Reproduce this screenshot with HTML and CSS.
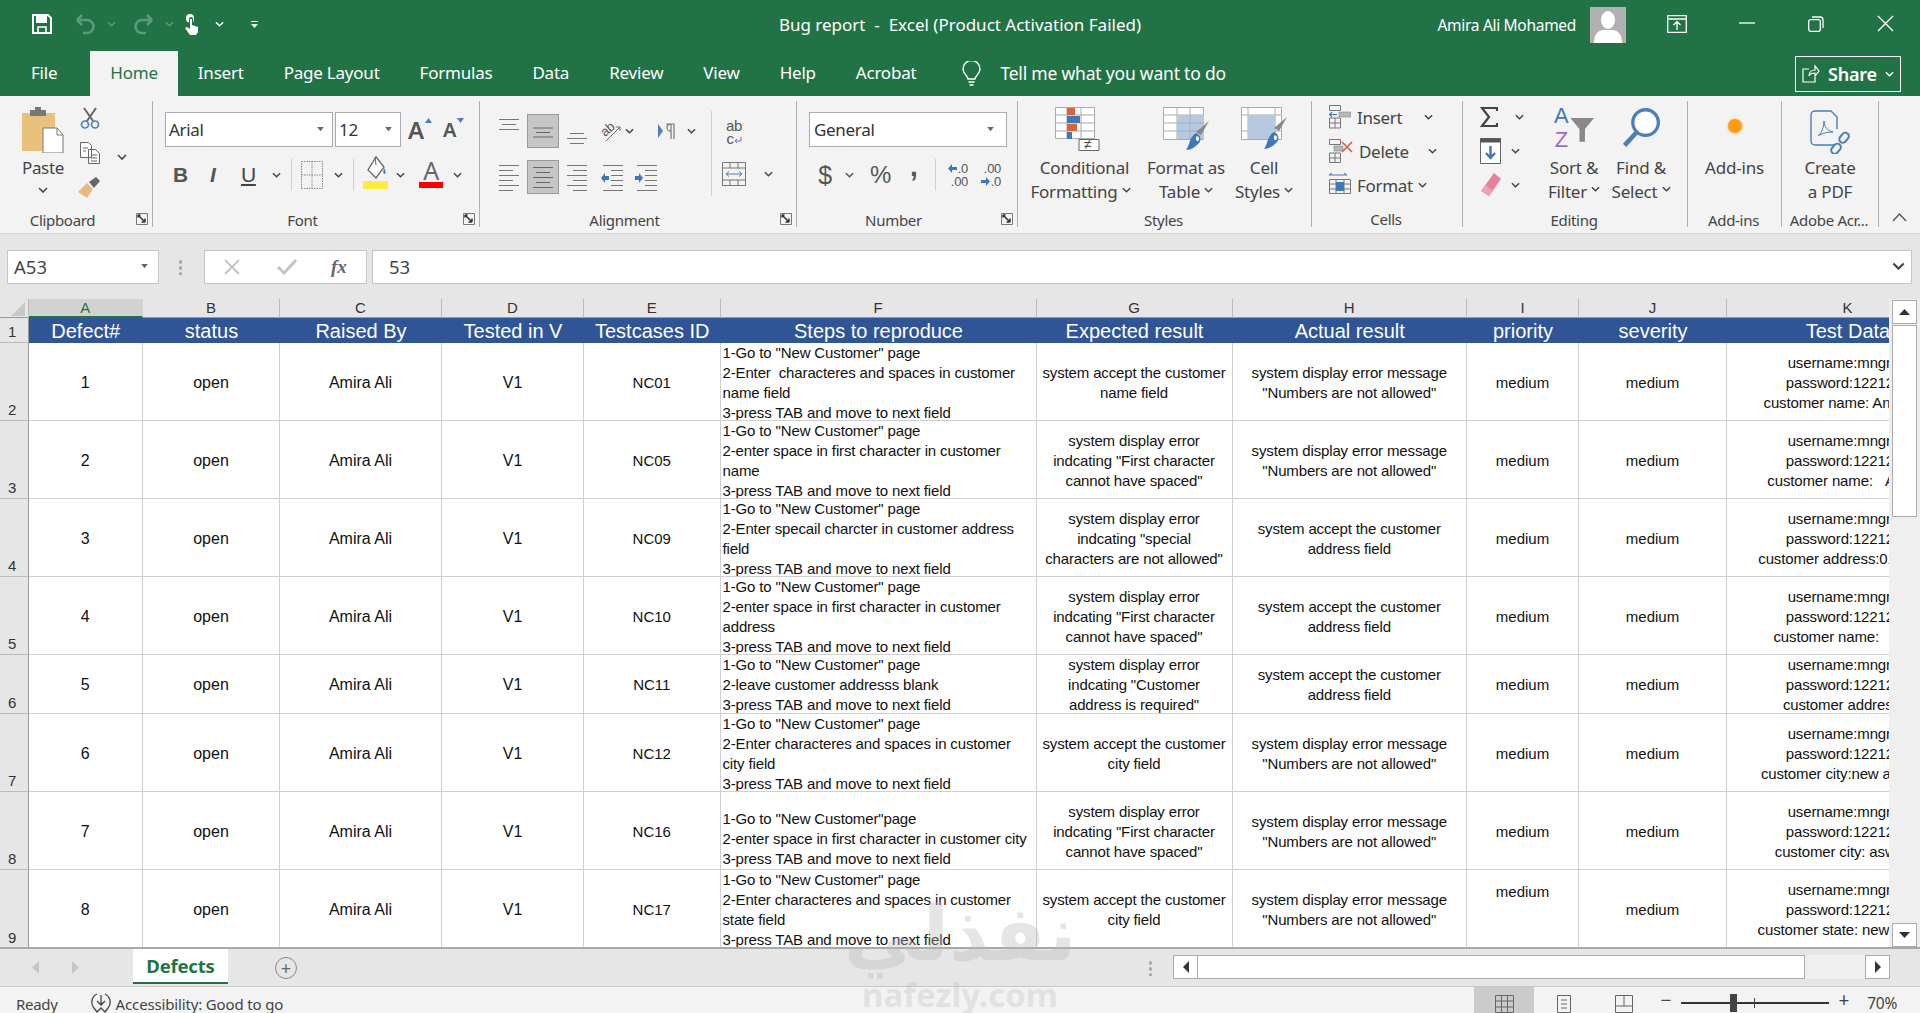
FILE: index.html
```html
<!DOCTYPE html>
<html lang="en">
<head>
<meta charset="utf-8">
<title>Bug report - Excel</title>
<link rel="stylesheet" href="styles.css">
</head>
<body>
<svg class="defs" width="0" height="0" aria-hidden="true">
  <symbol id="chev" viewBox="0 0 10 6"><path d="M1 1l4 4 4-4" fill="none" stroke="currentColor" stroke-width="1.6"/></symbol>
  <symbol id="launch" viewBox="0 0 12 12"><path d="M.5.5h11v11H.5z" fill="none" stroke="#777"/><path d="M2 2h2.5M2 2v2.5M2 2l7 7M9 9V5.5M9 9H5.5" fill="none" stroke="#333" stroke-width="1.5"/></symbol>
  <symbol id="drop" viewBox="0 0 10 6"><path d="M1 0h8L5 5z" fill="#666"/></symbol>
</svg>

<header class="titlebar">
  <div class="qat">
    <svg class="q-save" width="20" height="20" viewBox="0 0 20 20"><path d="M1 1h15l3 3v15H1z" fill="none" stroke="#fff" stroke-width="2"/><path d="M4 2h11v7H4z" fill="#fff"/><path d="M6 13h8v6H6z" fill="none" stroke="#fff" stroke-width="1.6"/></svg>
    <svg class="q-undo" width="22" height="22" viewBox="0 0 22 22"><path d="M3 7l5-5M3 7l5 5M3 7h10a6 6 0 0 1 0 13H9" fill="none" stroke="#5c9a7c" stroke-width="2.6"/></svg>
    <svg class="q-c1 dim" width="9" height="6"><use href="#chev"/></svg>
    <svg class="q-redo" width="22" height="22" viewBox="0 0 22 22"><path d="M19 7l-5-5M19 7l-5 5M19 7H9a6 6 0 0 0 0 13h4" fill="none" stroke="#5c9a7c" stroke-width="2.6"/></svg>
    <svg class="q-c2 dim" width="9" height="6"><use href="#chev"/></svg>
    <svg class="q-hand" width="16" height="22" viewBox="0 0 16 22"><path d="M6 1a4 4 0 0 1 4 4v2a4 4 0 0 1-1 2.500V6a2 2 0 0 0-4 0v3.500A4 4 0 0 1 2 7V5a4 4 0 0 1 4-4z" fill="#fff"/><path d="M6 6h2v6l6 2v5l-2 3H6l-5-7 2-1 3 2z" fill="#fff"/></svg>
    <svg class="q-c3 light" width="9" height="6"><use href="#chev"/></svg>
    <svg class="q-more" width="9" height="9" viewBox="0 0 9 9"><path d="M1 1h7v1H1zM1 4h7L4.500 8z" fill="#fff"/></svg>
  </div>
  <div class="doc-title">Bug report&nbsp; -&nbsp; Excel (Product Activation Failed)</div>
  <div class="win">
    <span class="user">Amira Ali Mohamed</span>
    <svg class="avatar" width="36" height="36" viewBox="0 0 36 36"><path fill="#b1b1b1" d="M0 0h36v36H0z"/><ellipse cx="18" cy="13" rx="7" ry="9" fill="#fff"/><path d="M4 36c0-8 3-12 9-13h10c6 1 9 5 9 13z" fill="#fff"/></svg>
    <svg class="w-disp" width="20" height="18" viewBox="0 0 20 18"><path d="M.7.7h18.600v16.600H.7zM1 4h18M10 15V7M6.500 10L10 6.500l3.500 3.500" fill="none" stroke="#fff" stroke-width="1.300"/></svg>
    <svg class="w-min" width="16" height="2" viewBox="0 0 16 2"><path d="M0 1h16" stroke="#fff" stroke-width="1.300"/></svg>
    <svg class="w-res" width="16" height="16" viewBox="0 0 16 16"><rect x=".7" y="3.700" width="11.600" height="11.600" rx="2" fill="none" stroke="#fff" stroke-width="1.300"/><path d="M4 1h8a3 3 0 0 1 3 3v8" fill="none" stroke="#fff" stroke-width="1.300"/></svg>
    <svg class="w-close" width="17" height="17" viewBox="0 0 17 17"><path d="M1 1l15 15M16 1L1 16" stroke="#fff" stroke-width="1.400"/></svg>
  </div>
</header>

<nav class="tabs">
  <span class="tab tab-file">File</span>
  <span class="tab tab-home">Home</span>
  <span class="tab">Insert</span>
  <span class="tab">Page Layout</span>
  <span class="tab">Formulas</span>
  <span class="tab">Data</span>
  <span class="tab">Review</span>
  <span class="tab">View</span>
  <span class="tab">Help</span>
  <span class="tab">Acrobat</span>
  <svg class="bulb" width="19" height="25" viewBox="0 0 19 25"><path d="M6 18c0-3-5-5-5-10a8.500 8.500 0 0 1 17 0c0 5-5 7-5 10zM6.500 21h6M7.500 24h4" fill="none" stroke="#fff" stroke-width="1.400"/></svg>
  <span class="tell">Tell me what you want to do</span>
  <span class="share">
    <svg width="18" height="19" viewBox="0 0 18 19"><path d="M7 5H1v13h12v-5M7 12c0-4 3-6 6-6V2l4 5-4 5V9c-3 0-5 1-6 3z" fill="none" stroke="#fff" stroke-width="1.200"/></svg>
    <b>Share</b>
    <svg class="light" width="9" height="6"><use href="#chev"/></svg>
  </span>
</nav>

<section class="ribbon">
  <div class="grp g-clip">
    <div class="g-body clip-body">
      <div class="paste">
        <svg width="42" height="46" viewBox="0 0 42 46"><path d="M0 6h33v38H0z" fill="#e8c27c"/><path d="M8 3h16v6H8z" fill="#777"/><path d="M13 0h6v5h-6z" fill="#777"/><path d="M21 21h14l6 7v18H21z" fill="#fff" stroke="#777"/><path d="M35 21v7h6" fill="none" stroke="#777"/></svg>
        <span class="paste-t">Paste</span>
        <svg class="mt-chev" width="10" height="6"><use href="#chev"/></svg>
      </div>
      <div class="clip-small">
        <svg width="20" height="22" viewBox="0 0 20 22"><path d="M4 1l9 13M16 1L7 14" stroke="#666" stroke-width="2"/><circle cx="5" cy="17.500" r="3.500" fill="none" stroke="#4a7fb8" stroke-width="1.700"/><circle cx="15" cy="17.500" r="3.500" fill="none" stroke="#4a7fb8" stroke-width="1.700"/></svg>
        <svg width="20" height="22" viewBox="0 0 20 22"><path d="M.5.500h8l3 3v12H.5zM8.500 7.500h7l4 4v10h-11z" fill="#fff" stroke="#666"/><path d="M3 6h5M3 9h3M11 13h6M11 16h6M11 19h6" stroke="#666"/></svg>
        <svg width="23" height="21" viewBox="0 0 23 21"><path d="M9 6l6 6-6 9-9-6z" fill="#e8b87c"/><path d="M11 5l7-5 4 4-6 7z" fill="#666"/></svg>
      </div>
      <svg class="clip-chev" width="10" height="6"><use href="#chev"/></svg>
    </div>
    <div class="g-label lab-launch">Clipboard<svg class="launch" width="12" height="12"><use href="#launch"/></svg></div>
  </div>

  <div class="grp g-font">
    <div class="g-body stack">
      <div class="rrow">
        <div class="combo c-font">Arial<svg width="9" height="5"><use href="#drop"/></svg></div>
        <div class="combo c-size">12<svg width="9" height="5"><use href="#drop"/></svg></div>
        <span class="grow-a">A<svg width="7" height="5" viewBox="0 0 7 5"><path d="M3.500 0L7 5H0z" fill="#4a7fb8"/></svg></span>
        <span class="shrink-a">A<svg width="7" height="5" viewBox="0 0 7 5"><path d="M3.500 5L7 0H0z" fill="#4a7fb8"/></svg></span>
      </div>
      <div class="rrow fmt">
        <b class="f-b">B</b>
        <i class="f-i">I</i>
        <u class="f-u">U</u>
        <svg class="f-c1" width="9" height="6"><use href="#chev"/></svg>
        <span class="vsep"></span>
        <svg class="f-bord" width="22" height="28" viewBox="0 0 22 28"><path d="M.5.500h21v27H.5zM11 .5v27M.5 14h21" fill="none" stroke="#888" stroke-dasharray="1.500 1"/></svg>
        <svg class="f-c2" width="9" height="6"><use href="#chev"/></svg>
        <span class="vsep"></span>
        <svg class="f-fill" width="25" height="33" viewBox="0 0 25 33"><path d="M13 1l8 10-8 11L5 14z" fill="#fff" stroke="#666" stroke-width="1.300"/><path d="M12 1l1 8" stroke="#666"/><path d="M21 12c2 3 2 6 .5 6S20 15 21 12z" fill="#4a7fb8"/><path d="M0 25h25v8H0z" fill="#ffeb3b"/></svg>
        <svg class="f-c3" width="9" height="6"><use href="#chev"/></svg>
        <span class="fontcolor">A</span>
        <svg class="f-c4" width="9" height="6"><use href="#chev"/></svg>
      </div>
    </div>
    <div class="g-label lab-launch">Font<svg class="launch" width="12" height="12"><use href="#launch"/></svg></div>
  </div>

  <div class="grp g-align">
    <div class="g-body align-body">
      <div class="stack al-stack">
        <div class="rrow al">
          <svg class="a-ic" width="20" height="34" viewBox="0 0 20 34"><path d="M0 5.500h20M3 10.500h14M0 15.500h20" stroke="#777"/></svg>
          <span class="on"><svg width="20" height="34" viewBox="0 0 20 34"><path d="M0 13h20M3 17.500h14M0 22h20" stroke="#666"/></svg></span>
          <svg class="a-ic" width="20" height="34" viewBox="0 0 20 34"><path d="M3 19.500h14M0 24.500h20M3 29.500h14" stroke="#777"/></svg>
          <svg class="a-or" width="20" height="24" viewBox="0 0 20 24"><text x="0" y="14" class="svg-ab" transform="rotate(-40 7 12)">ab</text><path d="M4 22L18 8M14 8h4v4" fill="none" stroke="#666"/></svg>
          <svg class="a-c" width="9" height="6"><use href="#chev"/></svg>
          <svg class="a-rtl" width="17" height="17" viewBox="0 0 17 17"><path d="M0 1l5 7-5 7z" fill="#4a7fb8"/><path d="M13 1v15M16 1v15M8 1h8v1M13 8a4 3.500 0 0 1 0-7" fill="none" stroke="#777" stroke-width="1.200"/></svg>
          <svg class="a-c2" width="9" height="6"><use href="#chev"/></svg>
        </div>
        <div class="rrow al2">
          <svg class="a-ic2" width="20" height="34" viewBox="0 0 20 34"><path d="M0 5.500h20M0 10.500h14M0 15.500h20M0 20.500h14M0 25.500h20M0 30.500h14" stroke="#777"/></svg>
          <span class="on"><svg width="20" height="34" viewBox="0 0 20 34"><path d="M0 6.500h20M3 11.500h14M0 16.500h20M3 21.500h14M0 26.500h20" stroke="#666"/></svg></span>
          <svg class="a-ic2" width="20" height="34" viewBox="0 0 20 34"><path d="M0 5.500h20M6 10.500h14M0 15.500h20M6 20.500h14M0 25.500h20M6 30.500h14" stroke="#777"/></svg>
          <svg class="a-ind" width="22" height="34" viewBox="0 0 22 34"><path d="M2 5.500h20M10 10.500h12M10 15.500h12M10 20.500h12M10 25.500h12M2 30.500h20" stroke="#777"/><path d="M0 18l4-5v3h4v4H4v3z" fill="#3f78b6"/></svg>
          <svg class="a-ind" width="22" height="34" viewBox="0 0 22 34"><path d="M2 5.500h20M10 10.500h12M10 15.500h12M10 20.500h12M10 25.500h12M2 30.500h20" stroke="#777"/><path d="M8 18l-4-5v3H0v4h4v3z" fill="#3f78b6"/></svg>
        </div>
      </div>
      <span class="vsep tall"></span>
      <div class="stack wrapcol">
        <div class="wrapic"><span>ab</span><span class="wr2">c<svg width="8" height="8" viewBox="0 0 8 8"><path d="M7 0v4H1M3 2L1 4l2 2" fill="none" stroke="#4a7fb8"/></svg></span></div>
        <div class="rrow mergerow">
          <svg width="24" height="24" viewBox="0 0 24 24"><path d="M.5.500h23v23H.5zM.5 6h23M.5 18h23M8 .5V6M16 .5V6M8 18v5.500M16 18v5.500" fill="none" stroke="#777"/><path d="M4 12h16M4 12l3-2.500M4 12l3 2.500M20 12l-3-2.500M20 12l-3 2.500" fill="none" stroke="#4a7fb8"/></svg>
          <svg width="9" height="6"><use href="#chev"/></svg>
        </div>
      </div>
    </div>
    <div class="g-label lab-launch">Alignment<svg class="launch" width="12" height="12"><use href="#launch"/></svg></div>
  </div>

  <div class="grp g-num">
    <div class="g-body stack">
      <div class="rrow"><div class="combo c-gen">General<svg width="9" height="5"><use href="#drop"/></svg></div></div>
      <div class="rrow numfmt">
        <span class="dollar">$</span>
        <svg class="n-c1" width="9" height="6"><use href="#chev"/></svg>
        <span class="pct">%</span>
        <b class="comma">,</b>
        <span class="vsep"></span>
        <span class="dec"><span><svg width="9" height="9" viewBox="0 0 9 9"><path d="M0 4.500L4 0v3h5v3H4v3z" fill="#3f78b6"/></svg>.0</span><span>.00</span></span>
        <span class="dec dec2"><span>.00</span><span><svg width="9" height="9" viewBox="0 0 9 9"><path d="M9 4.500L5 0v3H0v3h5v3z" fill="#3f78b6"/></svg>.0</span></span>
      </div>
    </div>
    <div class="g-label lab-launch">Number<svg class="launch" width="12" height="12"><use href="#launch"/></svg></div>
  </div>

  <div class="grp g-styles">
    <div class="g-body big-row">
      <div class="big b-cond">
        <svg width="52" height="44" viewBox="0 0 52 44"><path d="M.5.500h39v31H.5zM.5 8h39M.5 16h39M.5 24h39M12 .5v31M26 .5v31" fill="#fff" stroke="#aaa"/><path d="M12 1h8v7h-8z" fill="#d9613c"/><path d="M12 9h13v7H12z" fill="#3f78b6"/><path d="M12 17h10v7H12z" fill="#d9613c"/><path d="M12 25h5v7h-5z" fill="#3f78b6"/><path d="M24 32h20v11H24z" fill="#fff" stroke="#666" transform="translate(0 .5)"/><text x="29" y="42" class="svg-ne">≠</text></svg>
        <span class="bt">Conditional</span>
        <span class="bt">Formatting <svg width="9" height="6"><use href="#chev"/></svg></span>
      </div>
      <div class="big b-tab">
        <svg width="46" height="44" viewBox="0 0 46 44"><path d="M.5.500h40v32H.5zM.5 8h40M.5 16h40M.5 24h40M14 .5v32M27 .5v32" fill="#fff" stroke="#aaa"/><path d="M14 8h27v24H14z" fill="#b7c8df"/><path d="M14 16h27M14 24h27M27 8v24" stroke="#a0b0c6"/><path d="M46 14l-8 14-5-3z" fill="#888"/><path d="M33 26c5 2 6 8 2 11-3 3-7 6-12 6 4-5 3-13 10-17z" fill="#3f78b6"/><path d="M34 29c2 1 3 3 1 5-2 1-3-3-1-5z" fill="#fff"/></svg>
        <span class="bt">Format as</span>
        <span class="bt">Table <svg width="9" height="6"><use href="#chev"/></svg></span>
      </div>
      <div class="big b-cell">
        <svg width="46" height="44" viewBox="0 0 46 44"><path d="M.5.500h40v32H.5zM.5 8h40M.5 24h40M7 .5v32M34 .5v32" fill="#fff" stroke="#aaa"/><path d="M7 8h27v24H7z" fill="#b7c8df"/><path d="M46 10l-8 14-5-3z" fill="#888"/><path d="M33 25c5 2 6 8 2 11-3 3-7 6-12 6 4-5 3-13 10-17z" fill="#3f78b6"/><path d="M34 28c2 1 3 3 1 5-2 1-3-3-1-5z" fill="#fff"/></svg>
        <span class="bt">Cell</span>
        <span class="bt">Styles <svg width="9" height="6"><use href="#chev"/></svg></span>
      </div>
    </div>
    <div class="g-label">Styles</div>
  </div>

  <div class="grp g-cells">
    <div class="g-body cells-body">
      <div class="cellrow c-ins">
        <svg width="22" height="24" viewBox="0 0 22 24"><path d="M.5.500h11v5H.5zM.5 13h11v10H.5zM6 13v10M.5 18h11" fill="none" stroke="#777"/><path d="M10 7h12v5H10z" fill="#b8b8b8" stroke="#777" stroke-width=".5"/><path d="M0 9.500h8M3 7L.5 9.500 3 12" fill="none" stroke="#3f78b6" stroke-width="1.200"/></svg>
        <span>Insert</span><svg class="cc" width="9" height="6"><use href="#chev"/></svg>
      </div>
      <div class="cellrow c-del">
        <svg width="24" height="24" viewBox="0 0 24 24"><path d="M.5.500h11v5H.5zM.5 14h11v9.500H.5zM6 14v9.500M.5 19h11" fill="none" stroke="#777"/><path d="M5 7h9v5H5z" fill="#b8b8b8" stroke="#777" stroke-width=".5"/><path d="M13 3l10 10M23 3L13 13" stroke="#d9613c" stroke-width="1.600"/></svg>
        <span>Delete</span><svg class="cc" width="9" height="6"><use href="#chev"/></svg>
      </div>
      <div class="cellrow c-fmt">
        <svg width="22" height="26" viewBox="0 0 22 26"><path d="M0 3h18M0 3l3-2M18 3l-3-2" fill="none" stroke="#3f78b6"/><path d="M.5 7.500h21v14H.5zM7 7.500v14M15 7.500v14M.5 12h21M.5 17h21" fill="none" stroke="#777"/><path d="M7 10h8v9H7z" fill="#3f78b6"/></svg>
        <span>Format</span><svg class="cc" width="9" height="6"><use href="#chev"/></svg>
      </div>
    </div>
    <div class="g-label">Cells</div>
  </div>

  <div class="grp g-edit">
    <div class="g-body edit-body">
      <div class="edit-small">
        <div class="es es1"><svg width="18" height="20" viewBox="0 0 18 20"><path d="M17 4V1H2l7 9-7 9h15v-3" fill="none" stroke="#444" stroke-width="2.200"/></svg><svg class="ec1" width="9" height="6"><use href="#chev"/></svg></div>
        <div class="es es2"><svg width="21" height="26" viewBox="0 0 21 26"><path d="M.5.500h20v25H.5z" fill="#fff" stroke="#666"/><path d="M.5.500h20v4H.5z" fill="#555"/><path d="M10.500 8v12M6 15l4.500 5 4.500-5" fill="none" stroke="#3f78b6" stroke-width="2.400"/></svg><svg class="ec2" width="9" height="6"><use href="#chev"/></svg></div>
        <div class="es es3"><svg width="21" height="24" viewBox="0 0 21 24"><path d="M14 0l7 6-12 17-8-5z" fill="#e8809a"/><path d="M1 18l5-6 7 6-4 5z" fill="#f0a0b4"/></svg><svg class="ec3" width="9" height="6"><use href="#chev"/></svg></div>
      </div>
      <div class="big b-sort">
        <svg width="44" height="42" viewBox="0 0 44 46"><text x="0" y="18" class="svg-az a">A</text><text x="1" y="44" class="svg-az z">Z</text><path d="M18 12h26l-10 12v14h-6V24z" fill="#888"/></svg>
        <span class="bt">Sort &amp;</span>
        <span class="bt">Filter <svg width="9" height="6"><use href="#chev"/></svg></span>
      </div>
      <div class="big b-find">
        <svg width="42" height="42" viewBox="0 0 42 46"><circle cx="26" cy="17" r="14" fill="#fff" stroke="#4a7fb8" stroke-width="3.600"/><path d="M16 28L3 42" stroke="#4a7fb8" stroke-width="5"/></svg>
        <span class="bt">Find &amp;</span>
        <span class="bt">Select <svg width="9" height="6"><use href="#chev"/></svg></span>
      </div>
    </div>
    <div class="g-label">Editing</div>
  </div>

  <div class="grp g-addins">
    <div class="g-body big-row">
      <div class="big b-add">
        <span class="dot"></span>
        <span class="bt">Add-ins</span>
      </div>
    </div>
    <div class="g-label">Add-ins</div>
  </div>

  <div class="grp g-adobe">
    <div class="g-body big-row">
      <div class="big b-pdf">
        <svg width="40" height="44" viewBox="0 0 40 44"><path d="M24 35H5a4 4 0 0 1-4-4V5a4 4 0 0 1 4-4h16l6 6v12" fill="none" stroke="#4a7fb8" stroke-width="1.400"/><path d="M8 26c4-3 6-10 6-15 0 6 4 10 9 11-5 0-11 1-15 4z" fill="none" stroke="#4a7fb8"/><g fill="none" stroke="#4a7fb8" stroke-width="2"><rect x="23" y="33" width="7" height="11" rx="3.500" transform="rotate(40 26 38)"/><rect x="31" y="22" width="7" height="11" rx="3.500" transform="rotate(40 34 27)"/></g></svg>
        <span class="bt">Create</span>
        <span class="bt">a PDF</span>
      </div>
    </div>
    <div class="g-label">Adobe Acr...</div>
  </div>
  <div class="collapse"><svg width="15" height="9" viewBox="0 0 15 9"><path d="M1 8l6.500-7L14 8" fill="none" stroke="#555" stroke-width="1.400"/></svg></div>
</section>

<section class="formula">
  <div class="namebox">A53<svg width="9" height="5"><use href="#drop"/></svg></div>
  <span class="fdots"></span>
  <div class="fbtns">
    <svg width="16" height="16" viewBox="0 0 16 16"><path d="M1 1l14 14M15 1L1 15" stroke="#c4c4c4" stroke-width="2"/></svg>
    <svg width="20" height="16" viewBox="0 0 20 16"><path d="M1 8l6 6L19 1" fill="none" stroke="#c4c4c4" stroke-width="3"/></svg>
    <span class="fx">fx</span>
  </div>
  <div class="finput"><span>53</span><svg width="13" height="8"><use href="#chev"/></svg></div>
</section>

<main class="sheet">
  <div class="gridwrap">
    <div class="grid">
      <div class="corner"><svg width="14" height="14" viewBox="0 0 14 14"><path d="M14 0v14H0z" fill="#c8c8c8"/></svg></div>
      <div class="col col-a">A</div><div class="col">B</div><div class="col">C</div><div class="col">D</div><div class="col">E</div><div class="col">F</div><div class="col">G</div><div class="col">H</div><div class="col">I</div><div class="col">J</div><div class="col">K</div>

      <div class="rh">1</div>
      <div class="th">Defect#</div><div class="th">status</div><div class="th">Raised By</div><div class="th">Tested in V</div><div class="th">Testcases ID</div><div class="th">Steps to reproduce</div><div class="th">Expected result</div><div class="th">Actual result</div><div class="th">priority</div><div class="th">severity</div><div class="th">Test Data</div>

      <div class="rh">2</div>
      <div class="td">1</div><div class="td">open</div><div class="td">Amira Ali</div><div class="td">V1</div><div class="td sm">NC01</div>
      <div class="td left">1-Go to "New Customer" page<br>2-Enter&nbsp; characteres and spaces in customer<br>name field<br>3-press TAB and move to next field</div>
      <div class="td">system accept the customer<br>name field</div>
      <div class="td">system display error message<br>"Numbers are not allowed"</div>
      <div class="td sm">medium</div><div class="td sm">medium</div>
      <div class="td">username:mngr12<br>password:1221211<br>customer name: Anna123</div>

      <div class="rh">3</div>
      <div class="td">2</div><div class="td">open</div><div class="td">Amira Ali</div><div class="td">V1</div><div class="td sm">NC05</div>
      <div class="td left">1-Go to "New Customer" page<br>2-enter space in first character in customer<br>name<br>3-press TAB and move to next field</div>
      <div class="td">system display error<br>indcating "First character<br>cannot have spaced"</div>
      <div class="td">system display error message<br>"Numbers are not allowed"</div>
      <div class="td sm">medium</div><div class="td sm">medium</div>
      <div class="td">username:mngr12<br>password:1221211<br>customer name:&nbsp;&nbsp;&nbsp;Anna1</div>

      <div class="rh">4</div>
      <div class="td">3</div><div class="td">open</div><div class="td">Amira Ali</div><div class="td">V1</div><div class="td sm">NC09</div>
      <div class="td left">1-Go to "New Customer" page<br>2-Enter specail charcter in customer address<br>field<br>3-press TAB and move to next field</div>
      <div class="td">system display error<br>indcating "special<br>characters are not allowed"</div>
      <div class="td">system accept the customer<br>address field</div>
      <div class="td sm">medium</div><div class="td sm">medium</div>
      <div class="td">username:mngr12<br>password:1221211<br>customer address:0123456</div>

      <div class="rh">5</div>
      <div class="td">4</div><div class="td">open</div><div class="td">Amira Ali</div><div class="td">V1</div><div class="td sm">NC10</div>
      <div class="td left">1-Go to "New Customer" page<br>2-enter space in first character in customer<br>address<br>3-press TAB and move to next field</div>
      <div class="td">system display error<br>indcating "First character<br>cannot have spaced"</div>
      <div class="td">system accept the customer<br>address field</div>
      <div class="td sm">medium</div><div class="td sm">medium</div>
      <div class="td">username:mngr12<br>password:1221211<br>customer name:&nbsp;&nbsp;&nbsp;Ahm</div>

      <div class="rh">6</div>
      <div class="td">5</div><div class="td">open</div><div class="td">Amira Ali</div><div class="td">V1</div><div class="td sm">NC11</div>
      <div class="td left">1-Go to "New Customer" page<br>2-leave customer addresss blank<br>3-press TAB and move to next field</div>
      <div class="td">system display error<br>indcating "Customer<br>address is required"</div>
      <div class="td">system accept the customer<br>address field</div>
      <div class="td sm">medium</div><div class="td sm">medium</div>
      <div class="td">username:mngr12<br>password:1221211<br>customer address:0</div>

      <div class="rh">7</div>
      <div class="td">6</div><div class="td">open</div><div class="td">Amira Ali</div><div class="td">V1</div><div class="td sm">NC12</div>
      <div class="td left">1-Go to "New Customer" page<br>2-Enter characteres and spaces in customer<br>city field<br>3-press TAB and move to next field</div>
      <div class="td">system accept the customer<br>city field</div>
      <div class="td">system display error message<br>"Numbers are not allowed"</div>
      <div class="td sm">medium</div><div class="td sm">medium</div>
      <div class="td">username:mngr12<br>password:1221211<br>customer city:new alex123</div>

      <div class="rh">8</div>
      <div class="td">7</div><div class="td">open</div><div class="td">Amira Ali</div><div class="td">V1</div><div class="td sm">NC16</div>
      <div class="td left bottom">1-Go to "New Customer"page<br>2-enter space in first character in customer city<br>3-press TAB and move to next field</div>
      <div class="td">system display error<br>indcating "First character<br>cannot have spaced"</div>
      <div class="td">system display error message<br>"Numbers are not allowed"</div>
      <div class="td sm">medium</div><div class="td sm">medium</div>
      <div class="td">username:mngr12<br>password:1221211<br>customer city: aswan1</div>

      <div class="rh">9</div>
      <div class="td">8</div><div class="td">open</div><div class="td">Amira Ali</div><div class="td">V1</div><div class="td sm">NC17</div>
      <div class="td left">1-Go to "New Customer" page<br>2-Enter characteres and spaces in customer<br>state field<br>3-press TAB and move to next field</div>
      <div class="td">system accept the customer<br>city field</div>
      <div class="td">system display error message<br>"Numbers are not allowed"</div>
      <div class="td sm raised">medium</div><div class="td sm">medium</div>
      <div class="td">username:mngr12<br>password:1221211<br>customer state: new york12</div>
    </div>
  </div>
  <div class="vbar">
    <span class="vbtn"><svg width="11" height="6" viewBox="0 0 11 6"><path d="M5.500 0L11 6H0z" fill="#333"/></svg></span>
    <span class="vthumb"></span>
    <span class="vbtn vdown"><svg width="11" height="6" viewBox="0 0 11 6"><path d="M5.500 6L11 0H0z" fill="#333"/></svg></span>
  </div>
</main>

<section class="sheetbar">
  <svg class="nav1" width="7" height="13" viewBox="0 0 7 13"><path d="M7 0v13L0 6.500z" fill="#c6c6c6"/></svg>
  <svg class="nav2" width="7" height="13" viewBox="0 0 7 13"><path d="M0 0v13l7-6.500z" fill="#c6c6c6"/></svg>
  <span class="sheettab">Defects</span>
  <span class="addsheet">+</span>
  <span class="hdots"></span>
  <div class="hbar">
    <span class="hbtn"><svg width="6" height="12" viewBox="0 0 6 12"><path d="M6 0v12L0 6z" fill="#333"/></svg></span>
    <span class="hthumb"></span>
    <span class="hbtn hright"><svg width="6" height="12" viewBox="0 0 6 12"><path d="M0 0v12l6-6z" fill="#333"/></svg></span>
  </div>
</section>

<footer class="status">
  <span class="ready">Ready</span>
  <svg class="acc" width="22" height="22" viewBox="0 0 22 22"><path d="M7 2a9 9 0 0 0-3 14M15 2a9 9 0 0 1 3 14M11 3v9M7 9l4 4 4-4M4 16l3 4 4-4 4 4 3-4" fill="none" stroke="#444" stroke-width="1.300"/></svg>
  <span class="acc-t">Accessibility: Good to go</span>
  <span class="spacer"></span>
  <span class="vw vw-on"><svg width="19" height="18" viewBox="0 0 19 18"><path d="M.5.500h18v17H.5zM6.500.5v17M12.500.5v17M.5 6h18M.5 12h18" fill="none" stroke="#666"/></svg></span>
  <span class="vw"><svg width="14" height="18" viewBox="0 0 14 18"><path d="M.5.500h13v17H.5zM4 5h6M4 9h6M4 13h6" fill="none" stroke="#666"/></svg></span>
  <span class="vw"><svg width="18" height="18" viewBox="0 0 18 18"><path d="M.5.500h17v17H.5zM9 .5V11M.5 11H17" fill="none" stroke="#666"/></svg></span>
  <span class="zm">−</span>
  <span class="slider"><span class="knob"></span><span class="tick"></span></span>
  <span class="zm">+</span>
  <span class="pct70">70%</span>
</footer>

<div class="wm" aria-hidden="true">
  <span class="wm-ar" lang="ar" dir="rtl">نفذلي</span>
  <span class="wm-en">nafezly.com</span>
</div>
</body>
</html>
```

FILE: styles.css
```css
* { box-sizing: border-box; }
html, body { margin: 0; padding: 0; }
body {
  width: 1920px; height: 1013px; overflow: hidden; position: relative;
  display: flex; flex-direction: column;
  background: #e6e6e6; color: #444;
  font-family: "Noto Sans", "Open Sans", sans-serif;
}
.defs { position: absolute; }
svg { display: block; flex: none; }

/* title bar */
.titlebar { height: 51px; background: #217346; color: #fff; display: grid; grid-template-columns: 1fr auto 1fr; align-items: center; }
.qat { display: flex; align-items: center; padding-left: 32px; height: 51px; padding-bottom: 3px; }
.dim { color: #5c9a7c; }
.light { color: #fff; }
.q-undo { margin-left: 22px; }
.q-c1 { margin-left: 11px; }
.q-redo { margin-left: 17px; }
.q-c2 { margin-left: 10px; }
.q-hand { margin-left: 10px; }
.q-c3 { margin-left: 15px; }
.q-more { margin-left: 26px; }
.doc-title { font-size: 17px; margin-bottom: 2px; white-space: nowrap; }
.win { display: flex; align-items: center; justify-content: flex-end; height: 51px; }
.user { font-size: 15.500px; letter-spacing: -.3px; margin-right: 14px; margin-top: -1px; }
.avatar { margin-right: 41px; margin-top: -1px; }
.w-disp { margin-right: 52px; margin-top: -3px; }
.w-min { margin-right: 53px; margin-top: -6px; }
.w-res { margin-right: 53px; margin-top: -4px; }
.w-close { margin-right: 26px; margin-top: -4px; }

/* tabs */
.tabs { height: 45px; background: #217346; color: #fff; display: flex; align-items: center; padding-left: 11px; font-size: 17px; letter-spacing: -.22px; }
.tab { padding: 0 20px; height: 45px; line-height: 43px; white-space: nowrap; }
.tab-file { margin-right: 13px; }
.tab-home { background: #f3f3f3; color: #217346; }
.bulb { margin-left: 26px; margin-right: 19px; }
.tell { font-size: 17.500px; letter-spacing: -.2px; white-space: nowrap; margin-top: -2px; }
.share { margin-left: auto; margin-right: 19px; width: 106px; height: 36px; border: 1px solid #fff; display: flex; align-items: center; padding-left: 6px; gap: 8px; font-size: 18px; letter-spacing: -.2px; }
.share b { font-weight: 600; }

/* ribbon */
.ribbon { height: 138px; background: #f3f3f3; border-bottom: 1px solid #d8d8d8; display: flex; color: #444; padding-top: 5px; font-size: 17px; letter-spacing: -.3px; }
.grp { border-right: 1px solid #b0b0b0; height: 126px; display: flex; flex-direction: column; }
.g-clip { width: 153px; }
.g-font { width: 327px; }
.g-align { width: 317px; }
.g-num { width: 221px; }
.g-styles { width: 294px; }
.g-cells { width: 151px; }
.g-edit { width: 225px; }
.g-addins { width: 94px; }
.g-adobe { width: 97px; }
.g-body { height: 107px; flex: none; }
.g-label { flex: 1; display: flex; align-items: center; justify-content: center; position: relative; font-size: 15px; letter-spacing: -.3px; padding: 2px 2px 0 0; }
.g-label.lab-launch { padding-right: 27px; }
.launch { position: absolute; right: 4px; top: 5px; }
.stack { display: flex; flex-direction: column; }
.rrow { display: flex; align-items: center; }

.clip-body { display: flex; padding: 6px 0 0 21px; }
.paste { width: 44px; display: flex; flex-direction: column; align-items: center; }
.paste-t { margin-top: 4px; line-height: 22px; font-size: 17px; }
.mt-chev { margin-top: 8px; }
.clip-small { margin-left: 13px; display: flex; flex-direction: column; align-items: center; gap: 13px; }
.clip-chev { margin: 47px 0 0 16px; }

.g-font .g-body { padding: 11px 0 0 12px; }
.combo { background: #fff; border: 1px solid #ababab; height: 35px; display: flex; align-items: center; justify-content: space-between; padding: 0 7px 0 3px; color: #333; font-size: 17px; }
.c-font { width: 168px; font-family: "Noto Sans", sans-serif; }
.c-size { width: 66px; margin-left: 2px; }
.grow-a, .shrink-a { display: flex; align-items: flex-start; color: #555; font-weight: 600; line-height: 30px; }
.grow-a { font-size: 24px; margin-left: 7px; width: 25px; }
.shrink-a { font-size: 20px; margin-left: 10px; width: 22px; }
.grow-a svg, .shrink-a svg { margin-top: 3px; margin-left: 1px; }
.fmt { margin-top: 12px; height: 32px; padding-left: 6px; color: #444; }
.f-b, .f-i, .f-u { font-family: "Liberation Sans", sans-serif; font-size: 21px; line-height: 30px; }
.f-b { width: 33px; padding-left: 2px; color: #555; }
.f-i { width: 35px; padding-left: 6px; color: #555; font-weight: 700; font-size: 21px; }
.f-u { width: 27px; padding-left: 2px; color: #444; }
.f-c1 { margin-left: 6px; }
.vsep { width: 1px; height: 32px; background: #d0d0d0; flex: none; }
.fmt .vsep { margin: 0 9px 0 10px; }
.f-c2 { margin-left: 11px; }
.f-fill { margin-top: -6px; }
.f-c3 { margin-left: 8px; }
.fontcolor { margin: -4px 0 0 14px; width: 24px; height: 30px; color: #666; font-size: 25px; line-height: 25px; text-align: center; border-bottom: 6px solid #f00; }
.f-c4 { margin-left: 10px; }

.align-body { display: flex; padding: 13px 0 0 19px; }
.al-stack { width: 212px; flex: none; }
.on { width: 32px; height: 34px; background: #c6c6c6; border: 1px solid #999; display: flex; justify-content: center; }
.al { height: 34px; }
.al2 { height: 34px; margin-top: 12px; }
.al .on, .al2 .on { margin: 0 8px; }
.a-or { margin-left: 15px; }
.a-c { margin-left: 3px; }
.a-rtl { margin-left: 24px; }
.a-c2 { margin-left: 12px; }
.al2 .a-ind { margin-left: 14px; }
.al2 .a-ind + .a-ind { margin-left: 12px; }
.svg-ab { font: 13px "Liberation Sans", sans-serif; fill: #555; }
.svg-ne { font: 14px "Liberation Sans", sans-serif; fill: #444; }
.vsep.tall { height: 85px; margin: -3px 0 0 0; align-self: flex-start; }
.wrapcol { margin-left: 10px; }
.wrapic { display: flex; flex-direction: column; align-items: center; width: 24px; font: 15px/13px "Liberation Sans", sans-serif; color: #555; margin-top: 5px; height: 36px; }
.wr2 { display: flex; align-items: flex-end; }
.mergerow { gap: 18px; margin-top: 7px; }

.g-num .g-body { padding: 11px 0 0 12px; }
.c-gen { width: 198px; padding-left: 4px; padding-right: 11px; }
.numfmt { margin-top: 12px; height: 32px; color: #555; }
.dollar { font-size: 25px; margin-left: 7px; width: 18px; text-align: center; line-height: 30px; font-family: "Liberation Sans", sans-serif; }
.n-c1 { margin-left: 11px; }
.pct { font-size: 24px; margin-left: 16px; width: 24px; font-family: "Liberation Sans", sans-serif; }
.comma { font-family: "Liberation Sans", sans-serif; font-size: 28px; line-height: 20px; margin-left: 16px; width: 14px; margin-top: -16px; }
.numfmt .vsep { margin: 0 8px 0 11px; }
.dec { display: flex; flex-direction: column; align-items: flex-end; font: 13px/13px "Liberation Sans", sans-serif; color: #555; width: 24px; }
.dec span { display: flex; align-items: center; gap: 1px; }
.dec2 { margin-left: 9px; }

.big-row { display: flex; padding-top: 6px; }
.big { display: flex; flex-direction: column; align-items: center; }
.big svg:first-child { margin-bottom: 5px; }
.bt { line-height: 24px; display: flex; align-items: center; gap: 4px; white-space: nowrap; font-size: 17px; letter-spacing: -.2px; }
.b-cond { margin-left: 18px; width: 97px; }
.b-cond svg:first-child { margin-right: 8px; }
.b-tab { margin-left: 14px; width: 78px; }
.b-cell { margin-left: 8px; width: 62px; }
.cells-body { display: flex; flex-direction: column; padding: 0 0 0 17px; margin-top: -1px; }
.cellrow { display: flex; align-items: center; height: 34px; font-size: 17px; }
.cellrow > span { margin-left: 6px; }
.c-ins .cc { margin-left: 22px; }
.c-del .cc { margin-left: 19px; }
.c-fmt .cc { margin-left: 5px; }

.edit-body { display: flex; padding: 0 0 0 17px; }
.edit-small { width: 60px; display: flex; flex-direction: column; margin-top: -1px; }
.es { display: flex; align-items: center; height: 34px; }
.ec1 { margin-left: 17px; }
.ec2 { margin-left: 10px; }
.ec3 { margin-left: 10px; }
.b-sort { width: 68px; margin-left: 0; padding-top: 6px; }
.b-find { width: 68px; margin-left: -1px; padding-top: 6px; }
.b-sort svg:first-child, .b-find svg:first-child { margin-bottom: 7px; }
.svg-az { font: 700 22px "Liberation Sans", sans-serif; }
.svg-az.a { fill: #3f78b6; font-weight: 400; font-size: 24px; }
.svg-az.z { fill: #9a6fb8; font-weight: 400; font-size: 24px; }

.b-add { width: 100%; }
.dot { width: 14px; height: 14px; border-radius: 50%; background: #ff9b0f; box-shadow: 0 0 3px #ffb860; margin: 12px 0 23px 0; }
.b-pdf { width: 100%; }
.b-pdf svg:first-child { margin-top: 3px; margin-bottom: 2px; }
.collapse { flex: 1; display: flex; justify-content: center; align-items: flex-end; padding-bottom: 5px; height: 126px; }

/* formula bar */
.formula { height: 65px; flex: none; background: #e6e6e6; display: flex; padding: 16px 8px 0 7px; color: #444; }
.namebox { width: 152px; height: 34px; background: #fff; border: 1px solid #c6c6c6; display: flex; align-items: center; justify-content: space-between; padding: 0 9px 2px 6px; font-size: 18.500px; }
.fdots { width: 3px; height: 16px; margin: 9px 22px 0 20px; background: radial-gradient(circle, #aaa 1.500px, transparent 2px) 0 0 / 3px 6px; }
.fbtns { width: 163px; height: 34px; background: #fff; border: 1px solid #c6c6c6; display: flex; align-items: center; padding-left: 19px; }
.fbtns svg + svg { margin-left: 37px; }
.fx { font: italic 700 19px "Liberation Serif", serif; color: #666; margin-left: 34px; }
.finput { flex: 1; height: 34px; margin-left: 5px; background: #fff; border: 1px solid #c6c6c6; display: flex; align-items: center; justify-content: space-between; padding: 0 6px 2px 16px; font-size: 18.500px; }

/* sheet */
.sheet { height: 650px; flex: none; display: flex; background: #efefef; border-bottom: 2px solid #a9a9a9; }
.gridwrap { width: 1889px; overflow: hidden; flex: none; }
.grid {
  display: grid; width: 2000px;
  grid-template-columns: 28.500px 114.500px 137px 162px 142px 136.500px 316px 196px 234.500px 112px 148px 242px;
  grid-template-rows: 18.500px 25px 78px 78px 78px 78px 59px 78px 78px 79px;
  font: 15px/20px "Liberation Sans", sans-serif; color: #111;
}
.corner { background: #e6e6e6; border-right: 1px solid #bbb; border-bottom: 1px solid #999; display: flex; align-items: flex-end; justify-content: flex-end; padding: 0 3px 1px 0; }
.col { background: #e6e6e6; border-right: 1px solid #bbb; border-bottom: 1px solid #999; text-align: center; font-size: 15px; line-height: 17px; color: #333; }
.col-a { background: #d2d2d2; color: #217346; border-bottom: 2px solid #217346; border-right-color: #d2d2d2; }
.rh { background: #e6e6e6; border-right: 1px solid #999; border-bottom: 1px solid #bbb; display: flex; align-items: flex-end; justify-content: center; padding-right: 3px; font-size: 15px; line-height: 20px; color: #333; }
.th { background: #2f5597; color: #fff; font-size: 20px; padding-top: 2px; display: flex; align-items: center; justify-content: center; white-space: nowrap; }
.td { background: #fff; border-right: 1px solid #d0d0d0; border-bottom: 1px solid #d0d0d0; display: flex; align-items: center; justify-content: center; text-align: center; white-space: nowrap; padding-top: 3px; overflow: hidden; letter-spacing: -.14px; }
.td:nth-child(12n+2), .td:nth-child(12n+3), .td:nth-child(12n+4), .td:nth-child(12n+5) { font-size: 16px; letter-spacing: 0; }
.td.left { text-align: left; justify-content: flex-start; padding: 0 0 0 2px; align-items: flex-start; }
.td.bottom { align-items: flex-end; }
.td.sm { font-size: 15px; letter-spacing: 0; }
.td.raised { padding-bottom: 36px; }
.vbar { flex: 1; display: flex; flex-direction: column; padding: 1px 3px 0 3px; }
.vbtn { height: 24px; background: #fff; border: 1px solid #ababab; display: flex; align-items: center; justify-content: center; flex: none; }
.vthumb { height: 192px; margin-top: 1px; background: #fff; border: 1px solid #ababab; }
.vdown { margin-top: auto; }

/* sheet tabs */
.sheetbar { height: 38px; flex: none; background: #e6e6e6; display: flex; align-items: flex-start; border-bottom: 1px solid #c6c6c6; }
.nav1 { margin: 12px 0 0 32px; }
.nav2 { margin: 12px 0 0 33px; }
.sheettab { width: 95px; height: 35px; margin-left: 54px; background: #fff; border-bottom: 2px solid #217346; color: #217346; font-weight: 700; font-size: 18.500px; letter-spacing: -.2px; text-align: center; line-height: 34px; }
.addsheet { width: 22px; height: 22px; border: 1.500px solid #888; border-radius: 50%; margin: 8px 0 0 47px; display: flex; align-items: center; justify-content: center; color: #666; font-size: 18px; line-height: 1; }
.hdots { width: 3px; height: 16px; margin: 11px 21px 0 auto; background: radial-gradient(circle, #aaa 1.500px, transparent 2px) 0 0 / 3px 6px; }
.hbar { width: 717px; height: 24px; margin: 6px 30px 0 0; display: flex; background: #efefef; }
.hbtn { width: 25px; height: 24px; background: #fff; border: 1px solid #ababab; display: flex; align-items: center; justify-content: center; flex: none; }
.hthumb { width: 607px; background: #fff; border: 1px solid #ababab; border-left: 0; }
.hright { margin-left: auto; }

/* status bar */
.status { flex: 1; min-height: 0; background: #f3f3f3; display: flex; align-items: center; overflow: hidden; font-size: 15px; letter-spacing: -.3px; color: #444; }
.ready { margin-left: 16px; padding-top: 7px; }
.acc { margin: 5px 0 0 32px; }
.acc-t { margin-left: 4px; padding-top: 7px; letter-spacing: -.15px; }
.spacer { flex: 1; }
.vw { width: 60px; height: 100%; flex: none; display: flex; align-items: flex-start; justify-content: center; padding-top: 8px; }
.vw-on { background: #cbcbcb; }
.zm { font-size: 19px; margin-left: 14px; color: #444; width: 14px; text-align: center; }
.vw + .zm { margin-left: 4.500px; }
.slider { width: 148px; height: 2px; background: #333; position: relative; margin-left: 8px; margin-top: 6px; }
.knob { position: absolute; left: 49.500px; top: -8px; width: 7px; height: 18px; background: #444; }
.tick { position: absolute; left: 73.500px; top: -4px; width: 1px; height: 10px; background: #444; }
.slider + .zm { margin-left: 8px; }
.pct70 { margin: 0 23px 0 16.500px; font-size: 15.500px; padding-top: 6px; }

/* watermark lying over the page */
.wm { position: absolute; left: 850px; top: 892px; width: 220px; display: flex; flex-direction: column; align-items: center; pointer-events: none; color: #b8b8b8; opacity: .36; }
.wm-ar { font: 700 76px/84px "DejaVu Sans", sans-serif; }
.wm-en { font: 700 33px/38px "Noto Sans", sans-serif; opacity: .8; }
```
